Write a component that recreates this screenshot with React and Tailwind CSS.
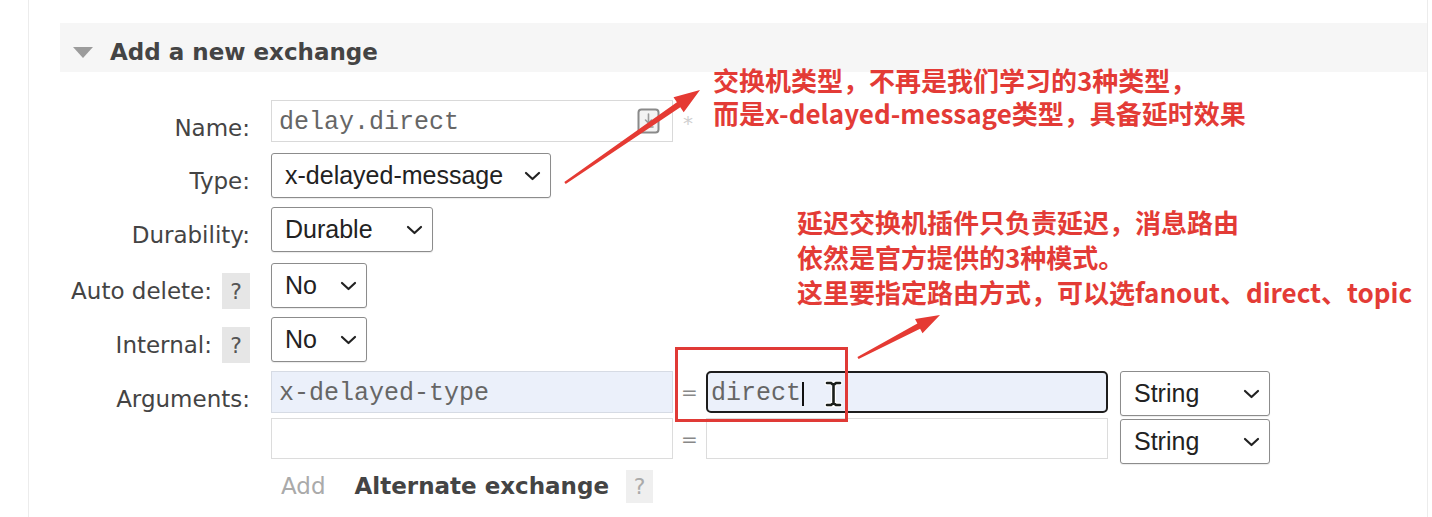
import React from 'react'

const Chevron = () => (
  <svg width="17" height="10" viewBox="0 0 17 10" fill="none">
    <path d="M2 2l6.5 6 6.5-6" stroke="#222" strokeWidth="2.2" strokeLinecap="round" strokeLinejoin="round" />
  </svg>
)

function Select({ value, className }) {
  return (
    <div className={`flex items-center justify-between pl-[13px] pr-[9px] border border-[#8c8c8c] rounded-[3px] bg-white text-[25px] leading-none text-[#222] font-['Liberation_Sans',Arial,sans-serif] shadow-[0_1px_1px_rgba(0,0,0,0.08)] ${className}`}>
      <span>{value}</span>
      <Chevron />
    </div>
  )
}

function Help() {
  return (
    <span className="inline-flex w-[28px] h-[36px] items-center justify-center text-[22px] bg-[#e6e6e6] text-[#555]">
      ?
    </span>
  )
}

// row height is fixed by the caller, label sits a bit lower than the control
function Row({ label, help, className, children }) {
  return (
    <div className={`flex items-start ${className}`}>
      <div className="w-[221px] h-[36px] mt-[10px] flex items-center justify-end gap-[10px]">
        <span>{label}</span>
        {help && <Help />}
      </div>
      <div className="ml-[21px]">{children}</div>
    </div>
  )
}

function NameIcon() {
  return (
    <svg width="23" height="26" viewBox="0 0 23 26" fill="none">
      <rect x="1.5" y="1.5" width="20" height="23" rx="3" stroke="#8a8a8a" strokeWidth="2" fill="#f3f3f3" />
      <path d="M11.5 6v9M8.5 12l3 3 3-3M7 19h9" stroke="#9a9a9a" strokeWidth="1.6" strokeLinecap="round" />
    </svg>
  )
}

export default function App() {
  return (
    <div className="relative w-[1432px] h-[517px] overflow-hidden bg-white font-['DejaVu_Sans',Verdana,sans-serif] text-[23px] text-[#444]">
      <div className="h-full pl-[28px] pr-[4px]">
        <div className="h-full border-l border-r border-[#ececec] pt-[23px]">
          {/* header */}
          <div className="ml-[31px] h-[49px] bg-[#f6f6f6] flex items-center pt-[9px]">
            <svg className="ml-[13px]" width="20" height="11" viewBox="0 0 20 11">
              <path d="M0 0h20L10 11z" fill="#9c9c9c" />
            </svg>
            <span className="ml-[17px] font-bold">Add a new exchange</span>
          </div>

          <div className="mt-[28px]">
            <Row label="Name:" className="h-[42px]">
              <div className="flex items-start">
                <div className="relative w-[402px] h-[42px] border border-[#d9d9d9] bg-white flex items-center pl-[7px] pt-[4px] font-['Liberation_Mono','Courier_New',monospace] text-[25px] text-[#666]">
                  delay.direct
                  <div className="absolute right-[12px] top-[7px]">
                    <NameIcon />
                  </div>
                </div>
                <span className="ml-[10px] mt-[8px] text-[20px] text-[#cfcfcf]">*</span>
              </div>
            </Row>

            <Row label="Type:" className="mt-[11px] h-[45px]">
              <Select value="x-delayed-message" className="w-[280px] h-[45px]" />
            </Row>

            <Row label="Durability:" className="mt-[9px] h-[45px]">
              <Select value="Durable" className="w-[162px] h-[45px]" />
            </Row>

            <Row label="Auto delete:" help className="mt-[11px] h-[45px]">
              <Select value="No" className="w-[96px] h-[45px]" />
            </Row>

            <Row label="Internal:" help className="mt-[9px] h-[45px]">
              <Select value="No" className="w-[96px] h-[45px]" />
            </Row>

            <Row label="Arguments:" className="mt-[9px]">
              <div className="flex flex-col">
                <div className="flex items-start h-[47px]">
                  <div className="w-[402px] h-[42px] border border-[#d6dbe4] bg-[#ebf0fa] flex items-center pl-[7px] pt-[3px] font-['Liberation_Mono','Courier_New',monospace] text-[25px] text-[#666]">
                    x-delayed-type
                  </div>
                  <div className="w-[33px] h-[42px] flex items-center justify-center text-[20px] text-[#888]">=</div>
                  <div className="w-[402px] h-[42px] border-2 border-[#1d1d1d] rounded-[5px] bg-[#ebf0fa] flex items-center pl-[3px] pt-[3px] font-['Liberation_Mono','Courier_New',monospace] text-[25px] text-[#666]">
                    direct
                    <span className="inline-block w-[2px] h-[24px] bg-[#111] ml-[1px]" />
                  </div>
                  <Select value="String" className="ml-[12px] w-[150px] h-[45px]" />
                </div>
                <div className="flex items-start h-[45px]">
                  <div className="w-[402px] h-[41px] border border-[#dcdcdc] bg-white" />
                  <div className="w-[33px] h-[41px] flex items-center justify-center text-[20px] text-[#888]">=</div>
                  <div className="w-[402px] h-[41px] border border-[#dcdcdc] bg-white" />
                  <Select value="String" className="ml-[12px] mt-[1px] w-[150px] h-[45px]" />
                </div>
                <div className="mt-[7px] h-[33px] flex items-center">
                  <span className="ml-[10px] text-[#aaa]">Add</span>
                  <span className="ml-[29px] font-bold">Alternate exchange</span>
                  <span className="ml-[17px] inline-flex w-[27px] h-[33px] items-center justify-center bg-[#efefef] text-[22px] text-[#aaa]">?</span>
                </div>
              </div>
            </Row>
          </div>
        </div>
      </div>

      {/* annotations */}
      <div className="absolute inset-0 pointer-events-none">
        <svg className="absolute left-0 top-0" width="1432" height="517" viewBox="0 0 1432 517">
          <polygon
            points="565.7,184 680.3,107.2 683.7,112.2 700,90 673.5,97.3 676.9,102.3 564.3,182"
            fill="#e53a33"
          />
          <polygon
            points="858.6,359.1 920.1,328.8 922.5,333.2 940,315 915,319.1 917.4,323.5 857.4,356.9"
            fill="#e53a33"
          />
          <rect x="676.5" y="348.5" width="170" height="72" fill="none" stroke="#e03a36" strokeWidth="3" />
          <g transform="translate(824 381)">
            <path d="M3 2h4l2.5 2 2.5-2h4M9.5 4v18M3 24h4l2.5-2 2.5 2h4" stroke="#fff" strokeWidth="5" fill="none" strokeLinecap="round" />
            <path d="M3 2h4l2.5 2 2.5-2h4M9.5 4v18M3 24h4l2.5-2 2.5 2h4" stroke="#1b1f1b" strokeWidth="2.6" fill="none" strokeLinecap="round" />
          </g>
        </svg>

        <div className="absolute left-[713px] top-[63px] whitespace-nowrap text-[26px] leading-[33px] font-bold text-[#e33b36] font-['Noto_Sans_CJK_SC','Noto_Sans',sans-serif]">
          <div>交换机类型，不再是我们学习的3种类型，</div>
          <div>而是x-delayed-message类型，具备延时效果</div>
        </div>

        <div className="absolute left-[797px] top-[204px] whitespace-nowrap text-[26px] leading-[35px] font-bold text-[#e33b36] font-['Noto_Sans_CJK_SC','Noto_Sans',sans-serif]">
          <div>延迟交换机插件只负责延迟，消息路由</div>
          <div>依然是官方提供的3种模式。</div>
          <div>这里要指定路由方式，可以选fanout、direct、topic</div>
        </div>
      </div>
    </div>
  )
}
